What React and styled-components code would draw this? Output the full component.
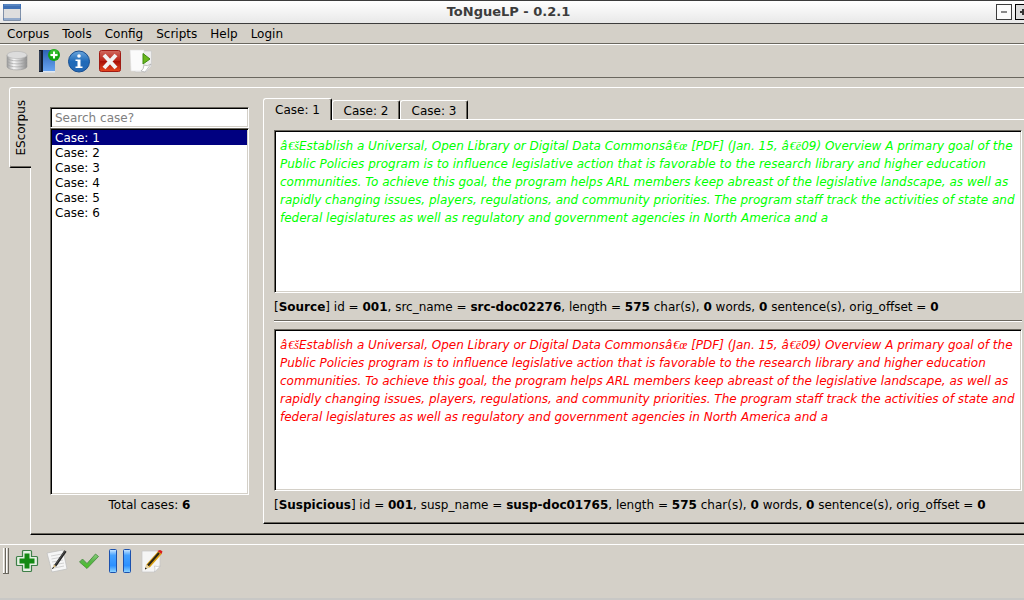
import React from "react";
import styled, { createGlobalStyle } from "styled-components";

const Global = createGlobalStyle`
  * { box-sizing: border-box; }
  html, body { margin: 0; height: 100%; }
  #root { height: 100%; }
  body {
    background: #d4d0c8;
    color: #000;
    font: 12px/15px "DejaVu Sans", sans-serif;
    overflow: hidden;
  }
  button, input { font: inherit; color: inherit; }
`;

const Window = styled.div`
  display: flex;
  flex-direction: column;
  height: 100vh;
  min-height: 560px;
  border-bottom: 2px solid #c8c8c6;
`;

const TitleBar = styled.header`
  display: flex;
  align-items: center;
  height: 24px;
  border-top: 1px solid #3c3c3c;
  border-bottom: 1px solid #3c3c3c;
  background: linear-gradient(#fff, #e8e8e8);
  padding-left: 3px;
  flex: none;
  overflow: hidden;
`;

const Title = styled.h1`
  flex: 1;
  margin: 0;
  font-size: 13px;
  line-height: 20px;
  font-weight: bold;
  text-align: center;
  color: #3c3c3c;
`;

const WindowButtons = styled.div`
  display: flex;
  gap: 3px;
  width: 28px;
  overflow: hidden;
`;

const WindowButton = styled.button`
  flex: none;
  width: 16px;
  height: 16px;
  padding: 0;
  border: 1px solid ${(p) => (p.$dark ? "#000" : "#3c3c3c")};
  background: ${(p) => (p.$dark ? "#dcdcdc" : "#fafafa")};
  svg { display: block; }
`;

const MenuBar = styled.nav`
  display: flex;
  height: 20px;
  padding: 3px 7px 1px;
  gap: 13px;
  border-bottom: 1px solid #6a675f;
  flex: none;
`;

const MenuItem = styled.button`
  border: 0;
  padding: 0;
  background: none;
`;

const ToolBar = styled.div`
  display: flex;
  align-items: center;
  flex: none;
  height: ${(p) => (p.$bottom ? "54px" : "34px")};
  padding: ${(p) => (p.$bottom ? "0 3px 21px" : "0 5px")};
  gap: 7px;
  border-top: 1px solid #fff;
  border-bottom: ${(p) => (p.$bottom ? "0" : "1px solid #6a675f")};
`;

const ToolButton = styled.button`
  display: block;
  width: 24px;
  height: 24px;
  padding: 0;
  border: 0;
  background: none;
  svg { display: block; }
`;

const Handle = styled.div`
  width: 6px;
  height: 26px;
  margin-right: -1px;
  background: linear-gradient(90deg, #fff 1px, #d4d0c8 1px 2px, #6a675f 2px 3px, #fff 3px 4px, #d4d0c8 4px 5px, #6a675f 5px);
  border-bottom: 1px solid #6a675f;
`;

const Workspace = styled.main`
  display: flex;
  flex: 1;
  min-height: 0;
  padding: 9px 0 9px 9px;
`;

const raised = `
  border: 1px solid #fff;
  border-right: 0;
  border-bottom-color: #000;
  box-shadow: inset 0 -1px #6a675f;
`;

const SideTab = styled.button`
  ${raised}
  flex: none;
  width: 22px;
  height: 81px;
  margin-right: -1px;
  padding: 0;
  border-radius: 3px 0 0 2px;
  background: #d4d0c8;
  position: relative;
  span {
    display: block;
    writing-mode: vertical-rl;
    transform: rotate(180deg);
    width: 22px;
    line-height: 22px;
    text-align: center;
  }
`;

const Frame = styled.section`
  ${raised}
  flex: 1;
  min-width: 0;
  display: flex;
  gap: 14px;
  padding: 9px 0 10px 19px;
`;

const CaseColumn = styled.div`
  width: 199px;
  flex: none;
  display: flex;
  flex-direction: column;
  padding-top: 10px;
`;

const sunken = `
  border: 1px solid;
  border-color: #6a675f #fff #fff #6a675f;
  box-shadow: inset 1px 1px #000, inset -1px -1px #d4d0c8;
  background: #fff;
`;

const SearchInput = styled.input`
  ${sunken}
  width: 100%;
  height: 21px;
  padding: 1px 4px 0;
  outline: 0;
  &::placeholder { color: #808080; opacity: 1; }
`;

const CaseList = styled.ul`
  ${sunken}
  list-style: none;
  margin: 0;
  padding: 1px;
  flex: 1;
`;

const CaseItem = styled.li`
  height: 15px;
  line-height: 17px;
  padding-left: 3px;
  background: ${(p) => (p.$selected ? "#000080" : "transparent")};
  color: ${(p) => (p.$selected ? "#fff" : "#000")};
`;

const Total = styled.p`
  margin: 3px 0 11px;
  text-align: center;
`;

const Tabbed = styled.div`
  flex: 1;
  min-width: 0;
  display: flex;
  flex-direction: column;
`;

const Tabs = styled.div`
  display: flex;
  align-items: flex-end;
  height: 22px;
  flex: none;
`;

const Tab = styled.button`
  position: relative;
  height: ${(p) => (p.$active ? "22px" : "19px")};
  width: ${(p) => (p.$active ? "69px" : "68px")};
  padding: 2px 0 0;
  border: 1px solid #fff;
  border-right-color: #000;
  border-bottom: 0;
  box-shadow: inset -1px 0 #6a675f;
  border-radius: 3px 2px 0 0;
  background: #d4d0c8;
  margin-bottom: ${(p) => (p.$active ? "-1px" : "0")};
`;

const Panel = styled.div`
  ${raised}
  flex: 1;
  min-height: 0;
  display: flex;
  flex-direction: column;
  padding: 10px 2px 10px 10px;
`;

const Passage = styled.div`
  ${sunken}
  flex: 1;
  padding: 6px 5px;
  line-height: 18px;
  font-style: italic;
  color: ${(p) => p.$color};
`;

const Odd = styled.span`
  padding-left: 1px;
  font-family: "Liberation Serif", serif;
`;

const Info = styled.p`
  margin: 7px 0 0;
`;

const Rule = styled.hr`
  width: 100%;
  margin: 5px 0 7px;
  border: solid;
  border-width: 1px 0;
  border-color: #6a675f transparent #fff;
`;

const Svg = (p) => <svg width="24" height="24" viewBox="0 0 24 24" aria-hidden="true" {...p} />;

const DatabaseIcon = () => (
  <Svg>
    <defs>
      <linearGradient id="db"><stop offset="0" stopColor="#9a9a9a" /><stop offset=".35" stopColor="#f8f8f8" /><stop offset="1" stopColor="#8c8c8c" /></linearGradient>
    </defs>
    {[16, 13, 10, 7].map((y) => (
      <path key={y} d={`M2 ${y - 1}v2.500c0 4.500 20 4.500 20 0V${y - 1}z`} fill="url(#db)" stroke="#9c9c9c" strokeWidth=".6" />
    ))}
    <ellipse cx="12" cy="6" rx="10" ry="3.600" fill="#dcdcdc" stroke="#b4b4b4" strokeWidth=".6" />
  </Svg>
);

const BookIcon = () => (
  <Svg>
    <defs><linearGradient id="bk" x2="0" y2="1"><stop stopColor="#2d62b4" /><stop offset="1" stopColor="#67a3f0" /></linearGradient></defs>
    <path d="M3 1h16v21H3z" fill="url(#bk)" />
    <path d="M3 22h16v1.500H5z" fill="#dfe8f2" />
    <path d="M3 1h4v22H3z" fill="#111d30" /><path d="M4 2v20" stroke="#526078" />
    <circle cx="18" cy="6" r="6" fill="#12a312" /><circle cx="18" cy="4.500" r="4" fill="#4fcb43" opacity=".6" />
    <path d="M18 2.500v7M14.500 6h7" stroke="#fff" strokeWidth="2" />
  </Svg>
);

const InfoIcon = () => (
  <Svg>
    <defs><linearGradient id="inf" x2="0" y2="1"><stop stopColor="#6ba6dc" /><stop offset=".5" stopColor="#1f6ab9" /><stop offset="1" stopColor="#2468b4" /></linearGradient></defs>
    <circle cx="12" cy="12.500" r="10.500" fill="url(#inf)" stroke="#174e91" />
    <circle cx="12" cy="7" r="1.800" fill="#fff" />
    <path d="M8.500 10.500h5v7h2v1.500h-7v-1.500h2V12h-2z" fill="#fff" />
  </Svg>
);

const CloseIcon = () => (
  <Svg>
    <defs><linearGradient id="cl" x2="0" y2="1"><stop stopColor="#d06a60" /><stop offset=".48" stopColor="#bb2418" /><stop offset=".52" stopColor="#a81006" /><stop offset="1" stopColor="#e6461e" /></linearGradient></defs>
    <rect x="1.500" y="1.500" width="21" height="21" rx="2" fill="url(#cl)" stroke="#a01c14" />
    <path d="M6 6l12 13M18 6L6 19" stroke="#f2f2f2" strokeWidth="4" />
  </Svg>
);

const RunIcon = () => (
  <Svg>
    <path d="M6 2h16.500v15L17 23H6z" fill="#eeeeee" stroke="#c4c4c4" strokeWidth=".6" />
    <path d="M1 1h14l-1 21H2z" fill="#fbfbfb" stroke="#dedede" strokeWidth=".6" />
    <path d="M12 22q3-2 3-6 3 2 7-1l-6 8z" fill="#fff" stroke="#aaa" strokeWidth=".7" />
    <path d="M14 4.500l7 5.500-7 5z" fill="#69b71b" stroke="#3f8a12" />
  </Svg>
);

const AddIcon = () => (
  <Svg>
    <path d="M8.500 1.500h7q1 0 1 1v5h5q1 0 1 1v7q0 1-1 1h-5v5q0 1-1 1h-7q-1 0-1-1v-5h-5q-1 0-1-1v-7q0-1 1-1h5v-5q0-1 1-1z" fill="#e6f0e4" stroke="#3e7f48" strokeWidth="1.200" />
    <path d="M9.500 4.500h5v5h5v5h-5v5h-5v-5h-5v-5h5z" fill="#138a13" />
  </Svg>
);

const NoteIcon = () => (
  <Svg>
    <path d="M1 4l16-3 4 19-15 3z" fill="#f6f6f6" stroke="#bbb" strokeWidth=".7" />
    <path d="M5 7l11-2M5.500 10l11-2M6 13l11-2M7 16l11-2M8 19l10-2" stroke="#c8c8c8" strokeWidth=".8" />
    <path d="M19.500 2L9 17" stroke="#222" strokeWidth="2.600" />
    <path d="M19 2L9.500 15.500" stroke="#777" strokeWidth=".6" />
    <path d="M8 15.500l2 1.500-3.500 3z" fill="#d4b878" /><path d="M7.500 18l-1 2" stroke="#222" />
  </Svg>
);

const CheckIcon = () => (
  <Svg>
    <defs><linearGradient id="ck" x2="0" y2="1"><stop stopColor="#8bcf7d" /><stop offset=".5" stopColor="#58b54a" /><stop offset="1" stopColor="#49c51f" /></linearGradient></defs>
    <path d="M2.500 13l3-3 4.500 4.500 8.500-9.500 3 2.500L10 19.500z" fill="url(#ck)" stroke="#43883b" strokeWidth=".8" strokeLinejoin="round" />
  </Svg>
);

const PauseIcon = () => (
  <Svg>
    <defs><linearGradient id="ps" x2="0" y2="1"><stop stopColor="#d2eaff" /><stop offset=".25" stopColor="#46a2ff" /><stop offset=".7" stopColor="#2c90ff" /><stop offset="1" stopColor="#93d8ff" /></linearGradient></defs>
    <rect x="1.500" y=".5" width="7" height="23" rx="1" fill="url(#ps)" stroke="#1c51ad" />
    <rect x="15.500" y=".5" width="7" height="23" rx="1" fill="url(#ps)" stroke="#1c51ad" />
  </Svg>
);

const EditIcon = () => (
  <Svg>
    <path d="M3 2h18v15l-5 6H3z" fill="#f5f5f5" stroke="#c6c6c6" strokeWidth=".7" />
    <path d="M15.500 23q1-3 0-6 3 1 6 0z" fill="#fff" stroke="#bbb" strokeWidth=".6" />
    <path d="M21 3.500L9 17" stroke="#dca012" strokeWidth="4.600" />
    <path d="M20 4L9 16.500" stroke="#2a2418" strokeWidth="2" />
    <path d="M19.500 1.500q2-1.500 4 1l-1 2.500-4-3z" fill="#d91c1c" />
    <path d="M7 15.500l4 3-5 2z" fill="#e6cf9c" /><path d="M6 18.500v2l2-1z" fill="#222" />
  </Svg>
);

const topTools = [["Corpus", DatabaseIcon], ["Add corpus", BookIcon], ["Information", InfoIcon], ["Close", CloseIcon], ["Run script", RunIcon]];
const bottomTools = [["Add", AddIcon], ["Note", NoteIcon], ["Accept", CheckIcon], ["Pause", PauseIcon], ["Edit", EditIcon]];

const Tools = ({ items }) => items.map(([label, Icon]) => (
  <ToolButton key={label} aria-label={label}><Icon /></ToolButton>
));

const Excerpt = ({ color }) => (
  <Passage $color={color}>
    â<Odd>€š</Odd>Establish a Universal, Open Library or Digital Data Commonsâ<Odd>€œ</Odd> [PDF] (Jan. 15, â<Odd>€ē</Odd>09) Overview A primary goal of the Public Policies program is to influence legislative action that is favorable to the research library and higher education communities. To achieve this goal, the program helps ARL members keep abreast of the legislative landscape, as well as rapidly changing issues, players, regulations, and community priorities. The program staff track the activities of state and federal legislatures as well as regulatory and government agencies in North America and a
  </Passage>
);

const Details = ({ kind, field, name }) => (
  <Info>
    [<b>{kind}</b>] id = <b>001</b>, {field} = <b>{name}</b>, length = <b>575</b> char(s), <b>0</b> words, <b>0</b> sentence(s), orig_offset = <b>0</b>
  </Info>
);

export default function App() {
  return (
    <Window>
      <Global />
      <TitleBar>
        <svg width="18" height="17" viewBox="0 0 18 17" aria-hidden="true">
          <path d="M.5 .5h17v16H.500z" fill="#dedede" stroke="#8090a8" />
          <path d="M0 0h18v5H0z" fill="#3f70b4" /><path d="M1 1h16" stroke="#6f98cc" /><path d="M0 15h18" stroke="#4a78b8" />
        </svg>
        <Title>ToNgueLP - 0.2.1</Title>
        <WindowButtons>
          <WindowButton aria-label="Minimize"><svg width="14" height="14"><path d="M4 7h6" stroke="#888" strokeWidth="2" /></svg></WindowButton>
          <WindowButton $dark aria-label="Maximize"><svg width="14" height="14"><path d="M4 7h6M7 4v6" stroke="#333" strokeWidth="2" /></svg></WindowButton>
        </WindowButtons>
      </TitleBar>
      <MenuBar>
        {["Corpus", "Tools", "Config", "Scripts", "Help", "Login"].map((m) => <MenuItem key={m}>{m}</MenuItem>)}
      </MenuBar>
      <ToolBar><Tools items={topTools} /></ToolBar>
      <Workspace>
        <SideTab><span>EScorpus</span></SideTab>
        <Frame>
          <CaseColumn>
            <SearchInput placeholder="Search case?" aria-label="Search case" />
            <CaseList>
              {[1, 2, 3, 4, 5, 6].map((n) => <CaseItem key={n} $selected={n === 1}>Case: {n}</CaseItem>)}
            </CaseList>
            <Total>Total cases: <b>6</b></Total>
          </CaseColumn>
          <Tabbed>
            <Tabs role="tablist">
              {[1, 2, 3].map((n) => <Tab key={n} role="tab" aria-selected={n === 1} $active={n === 1}>Case: {n}</Tab>)}
            </Tabs>
            <Panel role="tabpanel">
              <Excerpt color="#00ff00" />
              <Details kind="Source" field="src_name" name="src-doc02276" />
              <Rule />
              <Excerpt color="#ff0000" />
              <Details kind="Suspicious" field="susp_name" name="susp-doc01765" />
            </Panel>
          </Tabbed>
        </Frame>
      </Workspace>
      <ToolBar $bottom><Handle /><Tools items={bottomTools} /></ToolBar>
    </Window>
  );
}
